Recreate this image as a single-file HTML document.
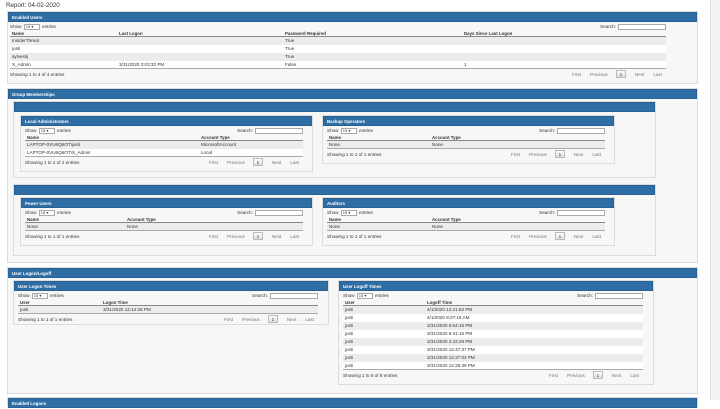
<!DOCTYPE html>
<html><head><meta charset="utf-8"><style>
*{box-sizing:border-box;margin:0;padding:0}
body{width:720px;height:400px;overflow:hidden;background:#fff;font-family:"Liberation Sans",sans-serif;font-size:4.6px;color:#333;position:relative}
.rbar{position:absolute;left:710px;top:0;width:10px;height:400px;background:#f2f2f2;border-left:1px solid #e2e2e2}
.title{position:absolute;left:6px;top:2px;font-size:6.2px;color:#333}
.box{position:absolute;background:#f7f7f7;border:1px solid #dcdcdc}
.hd{height:10px;background:#2f6ea5;color:#fff;font-weight:bold;font-size:4.4px;line-height:10px;padding-left:3px;border:1px solid #2a6195}
.bd{padding:1px 4px 0 4px;position:relative}
.ctl{height:8px;position:relative;line-height:8px}
.sel{display:inline-block;width:16px;height:6px;border:1px solid #aaa;background:#fff;vertical-align:middle;font-size:4px;line-height:4px;padding-left:1px;margin:0 1px}
.srch{position:absolute;right:0;top:1px;line-height:6px}
.srch span{display:inline-block;width:48px;height:6px;border:1px solid #aaa;background:#fff;vertical-align:top;margin-left:2px}
table{border-collapse:collapse;width:100%;table-layout:fixed}
th{font-weight:bold;text-align:left;height:5px;line-height:5px;border-bottom:1px solid #888;padding-left:2px;font-size:4.4px}
td{height:8px;padding-left:2px;line-height:7px;white-space:nowrap;overflow:hidden}
tr.o td{background:#ececec}
tr.e td{background:#fff}
tbody tr:last-child td{border-bottom:1px solid #aaa}
.ft{height:11px;position:relative;line-height:11px}
.pg{position:absolute;right:4px;top:1px;line-height:8px;color:#777}
.pg i{font-style:normal;margin-left:9px}
.pg b{display:inline-block;font-weight:normal;width:10px;height:8px;border:1px solid #bbb;background:linear-gradient(#fff,#ddd);text-align:center;margin-left:8px;color:#333}
</style></head><body>
<div class="rbar"></div>
<div class="title">Report: 04-02-2020</div>

<div class="box" style="left:7px;top:11px;width:691px;height:73px">
<div class="hd">Enabled Users</div>
<div class="bd" style="width:662px;padding-left:2px">
<div class="ctl">Show <span class="sel">15 ▾</span> entries<div class="srch">Search:<span></span></div></div>
<table><colgroup><col style="width:107px"><col style="width:166px"><col style="width:179px"><col></colgroup>
<thead><tr><th>Name</th><th>Last Logon</th><th>Password Required</th><th>Days Since Last Logon</th></tr></thead>
<tbody><tr class="o"><td>InsiderThreat</td><td></td><td>True</td><td></td></tr>
<tr class="e"><td>justi</td><td></td><td>True</td><td></td></tr>
<tr class="o"><td>sylvestij</td><td></td><td>True</td><td></td></tr>
<tr class="e"><td>X_Admin</td><td>3/31/2020 3:03:32 PM</td><td>False</td><td>1</td></tr></tbody></table>
<div class="ft">Showing 1 to 4 of 4 entries<div class="pg"><i>First</i><i>Previous</i><b>1</b><i>Next</i><i>Last</i></div></div>
</div></div>

<div class="box" style="left:7px;top:88px;width:691px;height:175px">
<div class="hd">Group Memberships</div></div>
<div class="box" style="left:13px;top:101px;width:643px;height:77px"><div class="hd"></div></div>
<div class="box" style="left:13px;top:184px;width:643px;height:72px"><div class="hd"></div></div>

<div class="box" style="left:20px;top:115px;width:293px;height:57px">
<div class="hd">Local Administrators</div>
<div class="bd" style="width:286px">
<div class="ctl">Show <span class="sel">15 ▾</span> entries<div class="srch">Search:<span></span></div></div>
<table><colgroup><col style="width:174px"><col></colgroup>
<thead><tr><th>Name</th><th>Account Type</th></tr></thead>
<tbody><tr class="o"><td>LAPTOP-0VU6Q6OT\justi</td><td>MicrosoftAccount</td></tr>
<tr class="e"><td>LAPTOP-0VU6Q6OT\X_Admin</td><td>Local</td></tr></tbody></table>
<div class="ft">Showing 1 to 2 of 2 entries<div class="pg"><i>First</i><i>Previous</i><b>1</b><i>Next</i><i>Last</i></div></div>
</div></div>

<div class="box" style="left:322px;top:115px;width:293px;height:49px">
<div class="hd">Backup Operators</div>
<div class="bd" style="width:286px">
<div class="ctl">Show <span class="sel">15 ▾</span> entries<div class="srch">Search:<span></span></div></div>
<table><colgroup><col style="width:103px"><col></colgroup>
<thead><tr><th>Name</th><th>Account Type</th></tr></thead>
<tbody><tr class="o"><td>None</td><td>None</td></tr></tbody></table>
<div class="ft">Showing 1 to 1 of 1 entries<div class="pg"><i>First</i><i>Previous</i><b>1</b><i>Next</i><i>Last</i></div></div>
</div></div>

<div class="box" style="left:20px;top:197px;width:293px;height:49px">
<div class="hd">Power Users</div>
<div class="bd" style="width:286px">
<div class="ctl">Show <span class="sel">15 ▾</span> entries<div class="srch">Search:<span></span></div></div>
<table><colgroup><col style="width:100px"><col></colgroup>
<thead><tr><th>Name</th><th>Account Type</th></tr></thead>
<tbody><tr class="o"><td>None</td><td>None</td></tr></tbody></table>
<div class="ft">Showing 1 to 1 of 1 entries<div class="pg"><i>First</i><i>Previous</i><b>1</b><i>Next</i><i>Last</i></div></div>
</div></div>

<div class="box" style="left:322px;top:197px;width:293px;height:49px">
<div class="hd">Auditors</div>
<div class="bd" style="width:286px">
<div class="ctl">Show <span class="sel">15 ▾</span> entries<div class="srch">Search:<span></span></div></div>
<table><colgroup><col style="width:103px"><col></colgroup>
<thead><tr><th>Name</th><th>Account Type</th></tr></thead>
<tbody><tr class="o"><td>None</td><td>None</td></tr></tbody></table>
<div class="ft">Showing 1 to 1 of 1 entries<div class="pg"><i>First</i><i>Previous</i><b>1</b><i>Next</i><i>Last</i></div></div>
</div></div>

<div class="box" style="left:7px;top:267px;width:691px;height:127px">
<div class="hd">User Logon/Logoff</div></div>

<div class="box" style="left:13px;top:280px;width:316px;height:45px">
<div class="hd">User Logon Times</div>
<div class="bd" style="width:308px">
<div class="ctl">Show <span class="sel">15 ▾</span> entries<div class="srch">Search:<span></span></div></div>
<table><colgroup><col style="width:83px"><col></colgroup>
<thead><tr><th>User</th><th>Logon Time</th></tr></thead>
<tbody><tr class="o"><td>justi</td><td>3/31/2020 12:14:28 PM</td></tr></tbody></table>
<div class="ft">Showing 1 to 1 of 1 entries<div class="pg"><i>First</i><i>Previous</i><b>1</b><i>Next</i><i>Last</i></div></div>
</div></div>

<div class="box" style="left:338px;top:280px;width:316px;height:105px">
<div class="hd">User Logoff Times</div>
<div class="bd" style="width:308px">
<div class="ctl">Show <span class="sel">15 ▾</span> entries<div class="srch">Search:<span></span></div></div>
<table><colgroup><col style="width:82px"><col></colgroup>
<thead><tr><th>User</th><th>Logoff Time</th></tr></thead>
<tbody><tr class="o"><td>justi</td><td>4/1/2020 12:21:52 PM</td></tr>
<tr class="e"><td>justi</td><td>4/1/2020 9:27:16 AM</td></tr>
<tr class="o"><td>justi</td><td>3/31/2020 6:54:16 PM</td></tr>
<tr class="e"><td>justi</td><td>3/31/2020 6:41:16 PM</td></tr>
<tr class="o"><td>justi</td><td>3/31/2020 2:42:29 PM</td></tr>
<tr class="e"><td>justi</td><td>3/31/2020 12:47:37 PM</td></tr>
<tr class="o"><td>justi</td><td>3/31/2020 12:37:03 PM</td></tr>
<tr class="e"><td>justi</td><td>3/31/2020 12:25:39 PM</td></tr></tbody></table>
<div class="ft">Showing 1 to 8 of 8 entries<div class="pg"><i>First</i><i>Previous</i><b>1</b><i>Next</i><i>Last</i></div></div>
</div></div>

<div class="box" style="left:7px;top:397px;width:691px;height:10px"><div class="hd">Enabled Logons</div></div>
</body></html>
